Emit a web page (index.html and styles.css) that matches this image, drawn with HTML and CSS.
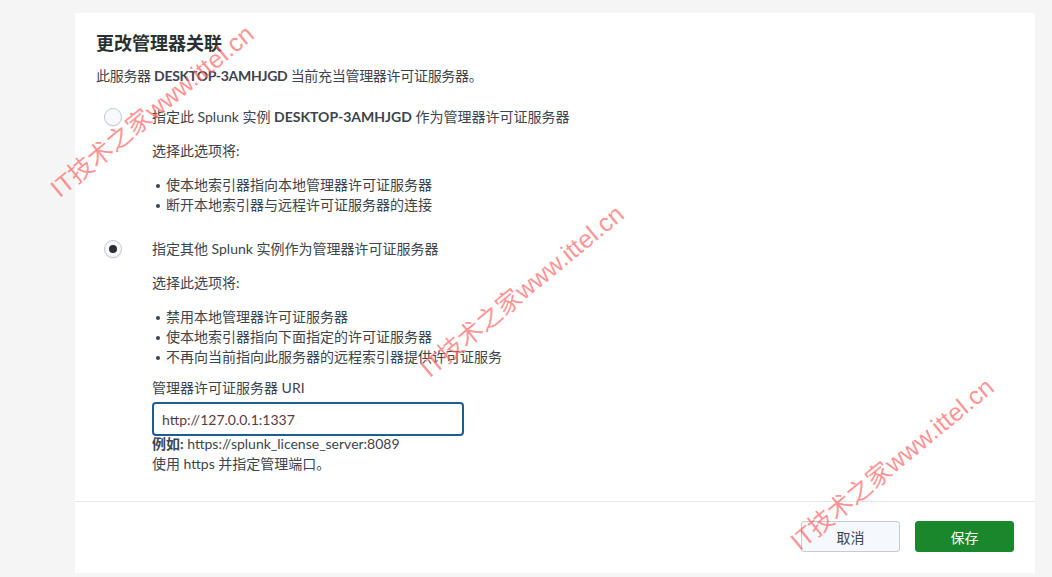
FILE: index.html
```html
<!DOCTYPE html>
<html lang="zh-CN">
<head>
    <meta charset="UTF-8">
    <meta name="viewport" content="width=device-width, initial-scale=1.0">
    <title>更改管理器关联</title>
    <link rel="stylesheet" href="styles.css">
</head>
<body>
    <div class="modal">
        <div class="modal-body">
            <h1>更改管理器关联</h1>
            <p class="desc">此服务器 <b>DESKTOP-3AMHJGD</b> 当前充当管理器许可证服务器。</p>

            <div class="option">
                <span class="radio"></span>
                <div class="option-text">指定此 Splunk 实例 <b>DESKTOP-3AMHJGD</b> 作为管理器许可证服务器</div>
            </div>
            <div class="option-detail">
                <p class="note">选择此选项将:</p>
                <ul class="effects">
                    <li>使本地索引器指向本地管理器许可证服务器</li>
                    <li>断开本地索引器与远程许可证服务器的连接</li>
                </ul>
            </div>

            <div class="option second">
                <span class="radio checked"></span>
                <div class="option-text">指定其他 Splunk 实例作为管理器许可证服务器</div>
            </div>
            <div class="option-detail">
                <p class="note">选择此选项将:</p>
                <ul class="effects">
                    <li>禁用本地管理器许可证服务器</li>
                    <li>使本地索引器指向下面指定的许可证服务器</li>
                    <li>不再向当前指向此服务器的远程索引器提供许可证服务</li>
                </ul>
                <label class="field-label" for="uri">管理器许可证服务器 URI</label>
                <input class="uri" id="uri" type="text" value="http://127.0.0.1:1337">
                <div class="help">
                    <div><b>例如:</b> https://splunk_license_server:8089</div>
                    <div>使用 https 并指定管理端口。</div>
                </div>
            </div>
        </div>
        <div class="modal-footer">
            <button class="btn">取消</button>
            <button class="btn primary">保存</button>
        </div>
    </div>

    <div class="mark mark-1">IT技术之家www.ittel.cn</div>
    <div class="mark mark-2">IT技术之家www.ittel.cn</div>
    <div class="mark mark-3">IT技术之家www.ittel.cn</div>
</body>
</html>
```

FILE: styles.css
```css
body {
    margin: 0;
    height: 577px;
    overflow: hidden;
    background: #f5f5f5;
    font-family: Lato, 'Noto Sans CJK SC', sans-serif;
    font-size: 14px;
    color: #3c444d;
    position: relative;
}
.modal {
    margin: 13px 0 0 75px;
    width: 960px;
    height: 560px;
    background: #fff;
    display: flex;
    flex-direction: column;
}
.modal-body {
    flex: 1;
    padding: 18px 21px 0;
}
h1 {
    margin: 0;
    font-size: 18px;
    line-height: 24px;
    font-weight: 700;
    color: #2b3033;
}
b {
    font-weight: 700;
}
.desc {
    margin: 11px 0 0;
    line-height: 20px;
    letter-spacing: -0.3px;
}
.option {
    display: flex;
    align-items: center;
    margin-top: 21px;
    padding-left: 8px;
    line-height: 20px;
}
.option.second {
    margin-top: 24px;
}
.radio {
    width: 16px;
    height: 16px;
    border: 1px solid #c3cbd4;
    border-radius: 50%;
    background: #f7f9fc;
    box-shadow: 0 1px 1px rgba(0, 0, 0, 0.08);
    display: flex;
    align-items: center;
    justify-content: center;
    flex-shrink: 0;
    margin-right: 30px;
}
.radio.checked::after {
    content: "";
    width: 8px;
    height: 8px;
    border-radius: 50%;
    background: #2b3033;
}
.option-detail {
    padding-left: 56px;
}
.note {
    margin: 14px 0 0;
    line-height: 20px;
}
.effects {
    list-style: none;
    margin: 14px 0 0;
    padding: 0 0 0 14px;
}
.effects li {
    line-height: 20px;
    position: relative;
}
.effects li::before {
    content: "";
    position: absolute;
    left: -10px;
    top: 9px;
    width: 4px;
    height: 4px;
    border-radius: 50%;
    background: #3c444d;
}
.field-label {
    display: block;
    margin-top: 11px;
    line-height: 20px;
}
.uri {
    display: block;
    margin-top: 4px;
    width: 312px;
    height: 34px;
    box-sizing: border-box;
    border: 2px solid #1b5f92;
    border-radius: 4px;
    padding: 0 8px;
    font-family: inherit;
    font-size: 14px;
    color: #5a3a48;
    outline: none;
}
.help {
    margin-top: -2px;
    line-height: 20px;
}
.modal-footer {
    height: 72px;
    border-top: 1px solid #e1e6eb;
    display: flex;
    align-items: center;
    justify-content: flex-end;
    gap: 15px;
    padding-right: 21px;
    padding-bottom: 2px;
    box-sizing: border-box;
}
.btn {
    width: 99px;
    height: 31px;
    border: 1px solid #c3cbd4;
    border-radius: 3px;
    background: #f5f8fd;
    font-family: inherit;
    font-size: 14px;
    color: #3c444d;
    cursor: pointer;
}
.btn.primary {
    background: #1a872c;
    border-color: #1a872c;
    color: #fff;
}
.mark {
    position: absolute;
    font-family: 'Liberation Sans', 'Noto Sans CJK SC', sans-serif;
    font-size: 25px;
    color: rgba(255, 100, 100, 0.7);
    white-space: nowrap;
    transform-origin: 0 100%;
    transform: rotate(-39.5deg);
    pointer-events: none;
}
.mark-1 {
    left: 64px;
    top: 168px;
}
.mark-2 {
    left: 434px;
    top: 348px;
}
.mark-3 {
    left: 804px;
    top: 521px;
}
```
